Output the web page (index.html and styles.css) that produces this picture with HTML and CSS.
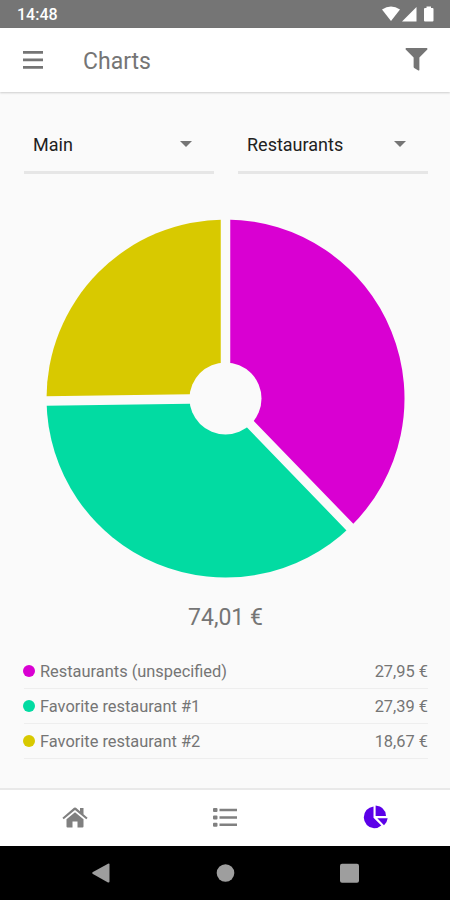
FILE: index.html
```html
<!DOCTYPE html>
<html lang="en">
<head>
    <meta charset="UTF-8">
    <meta name="viewport" content="width=device-width, initial-scale=1.0">
    <title>Charts</title>
    <link rel="stylesheet" href="styles.css">
</head>
<body>
    <div class="status-bar">
        <span class="time">14:48</span>
        <svg class="status-icons" width="54" height="18" viewBox="0 0 54 18" fill="#fff">
            <path d="M0 4.500Q9 -1.500 18 4.500L9 16Z"/>
            <path d="M34.500 2V16.500H20Z"/>
            <path d="M42 4Q42 3 43 3H44.500V1.500H49V3H50.500Q51.500 3 51.500 4V15.500Q51.500 16.500 50.500 16.500H43Q42 16.500 42 15.500Z"/>
        </svg>
    </div>
    <header class="app-bar">
        <svg class="menu" width="20" height="18" viewBox="0 0 20 18" fill="#757575">
            <path d="M0 0H20V2.800H0ZM0 7.500H20V10.300H0ZM0 15H20V17.800H0Z"/>
        </svg>
        <h1>Charts</h1>
        <svg class="filter" width="23" height="23" viewBox="0 0 24 24" fill="#757575">
            <path d="M1.200 0H22.800Q24 .6 23.300 1.500L15 10V23Q14.500 24 13.500 23.300L9.600 20.800Q9 20.300 9 19.500V10L.7 1.500Q0 .6 1.200 0Z"/>
        </svg>
    </header>

    <main>
        <div class="selects">
            <div class="select">
                <span>Main</span>
                <span class="arrow"></span>
            </div>
            <div class="select">
                <span>Restaurants</span>
                <span class="arrow"></span>
            </div>
        </div>

        <svg class="chart" width="360" height="360" viewBox="-179.500 -179.500 360 360">
            <path fill="#d900d2" d="M0 0V-179A179 179 0 0 1 124.450 128.660Z"/>
            <path fill="#02dba2" d="M0 0L124.450 128.660A179 179 0 0 1 -178.980 2.560Z"/>
            <path fill="#d8c900" d="M0 0L-178.980 2.560A179 179 0 0 1 0 -179Z"/>
            <path class="gap" d="M0 0V-185M0 0L129 133.340M0 0L-185 2.650"/>
            <circle r="36" fill="#fafafa"/>
        </svg>
        <div class="total">74,01 €</div>

        <ul class="legend">
            <li><i class="dot magenta"></i><span>Restaurants (unspecified)</span><b>27,95 €</b></li>
            <li><i class="dot green"></i><span>Favorite restaurant #1</span><b>27,39 €</b></li>
            <li><i class="dot yellow"></i><span>Favorite restaurant #2</span><b>18,67 €</b></li>
        </ul>
    </main>

    <nav class="tabs">
        <div class="tab">
            <svg width="26" height="21" viewBox="0 0 26 21" fill="#808080">
                <path d="M13 5.200L21.500 12.300V19.500Q21.500 20.500 20.500 20.500H15.500V14.500H10.500V20.500H5.500Q4.500 20.500 4.500 19.500V12.300Z"/>
                <path d="M12 .8Q13 0 14 .8L18 4.200V.9H21.500V7.200L25.600 10.700L24.300 12.200L13 2.900L1.700 12.200L.4 10.700Z"/>
            </svg>
        </div>
        <div class="tab">
            <svg width="24" height="19" viewBox="0 0 24 19" fill="#808080">
                <path d="M1 0H3.500Q4.500 0 4.500 1V3Q4.500 4 3.500 4H1Q0 4 0 3V1Q0 0 1 0ZM1 7.400H3.500Q4.500 7.400 4.500 8.400V10.400Q4.500 11.400 3.500 11.400H1Q0 11.400 0 10.400V8.400Q0 7.400 1 7.400ZM1 14.800H3.500Q4.500 14.800 4.500 15.800V17.800Q4.500 18.800 3.500 18.800H1Q0 18.800 0 17.800V15.800Q0 14.800 1 14.800Z"/>
                <path d="M6.500 .8H24V3.300H6.500ZM6.500 8.200H24V10.700H6.500ZM6.500 15.600H24V18.100H6.500Z"/>
            </svg>
        </div>
        <div class="tab">
            <svg width="25" height="24" viewBox="0 0 25 24" fill="#5b00e8">
                <path d="M10.500 1.400V12.800L18.300 20.500Q15.200 23.300 11 23.300A11 11 0 0 1 10.500 1.400Z"/>
                <path d="M12.600 .5Q22.300 1.300 23 10.900H12.600Z"/>
                <path d="M14.300 13.300H24.700Q24.200 17.500 21 20.200Z"/>
            </svg>
        </div>
    </nav>
    <div class="system-bar">
        <svg width="450" height="54" viewBox="0 0 450 54" fill="#9e9e9e">
            <path d="M92.500 26.200Q92 27 92.500 27.800L108 36.500Q109.500 36.800 109.500 35.500V18.500Q109.500 17.200 108 17.700Z"/>
            <circle cx="225.500" cy="27" r="8.800"/>
            <rect x="340" y="17.700" width="19" height="19" rx="2"/>
        </svg>
    </div>
</body>
</html>
```
FILE: styles.css
```css
body {
    font-family: Roboto, sans-serif;
    background-color: #fafafa;
    color: #757575;
    margin: 0;
    height: 900px;
    display: flex;
    flex-direction: column;
    overflow: hidden;
}
svg {
    display: block;
}
.status-bar {
    height: 28px;
    background-color: #757575;
    display: flex;
    align-items: center;
    justify-content: space-between;
    padding: 0 14px 0 17px;
    box-sizing: border-box;
}
.time {
    color: white;
    font-size: 16px;
    font-weight: 500;
    padding-top: 1px;
}
.app-bar {
    height: 64px;
    background-color: white;
    box-shadow: 0 1px 2px rgba(0, 0, 0, 0.18);
    display: flex;
    align-items: center;
    padding: 0 22px 0 23px;
}
.menu {
    margin-right: 40px;
}
.filter {
    margin-bottom: 2px;
}
h1 {
    flex: 1;
    margin: 0;
    padding-top: 3px;
    font-size: 23px;
    font-weight: 400;
}
main {
    flex: 1;
    padding: 0 22px 0 24px;
}
.selects {
    display: flex;
    gap: 24px;
    padding-top: 29px;
}
.select {
    flex: 1;
    height: 46px;
    border-bottom: 3px solid #e6e6e6;
    display: flex;
    align-items: center;
    justify-content: space-between;
    padding: 0 22px 4px 9px;
    color: #212121;
    font-size: 18px;
}
.arrow {
    border: 6px solid transparent;
    border-top-color: #757575;
    border-bottom: none;
}
.chart {
    margin: 45px 0 0 22px;
}
.total {
    margin-top: 23px;
    text-align: center;
    font-size: 23px;
    line-height: 32px;
    padding-right: 1px;
}
.gap {
    fill: none;
    stroke: #fafafa;
    stroke-width: 9.5px;
}
.legend {
    list-style: none;
    margin: 20px 0 0;
    padding: 0;
}
.legend li {
    display: flex;
    align-items: center;
    height: 34px;
    border-bottom: 1px solid #eeeeee;
    font-size: 16.4px;
}
.legend span,
.legend b {
    padding-top: 1px;
}
.legend b {
    margin-left: auto;
    font-weight: 400;
}
.dot {
    width: 12px;
    height: 12px;
    border-radius: 50%;
    margin: 0 5px 0 -1px;
}
.magenta {
    background-color: #d900d2;
}
.green {
    background-color: #02dba2;
}
.yellow {
    background-color: #d8c900;
}
.tabs {
    height: 56px;
    background-color: white;
    border-top: 2px solid #e9e9e9;
    display: flex;
}
.tab {
    flex: 1;
    display: flex;
    align-items: center;
    justify-content: center;
    padding-bottom: 2px;
}
.system-bar {
    height: 54px;
    background-color: black;
}
```
